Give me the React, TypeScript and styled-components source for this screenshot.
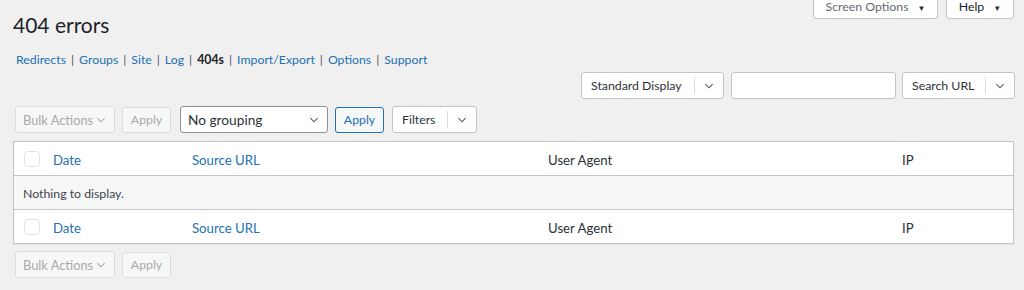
import React from 'react';
import styled, { createGlobalStyle, css } from 'styled-components';

const GlobalStyle = createGlobalStyle`
  html, body {
    margin: 0;
    padding: 0;
    background: #f0f0f1;
  }
  body {
    font-family: Lato, "Noto Sans", sans-serif;
    font-size: 12.3px;
    color: #3c434a;
  }
`;

const Page = styled.div`
  padding: 0 10px 0 13px;
  width: 1024px;
  box-sizing: border-box;
  white-space: nowrap;
`;

const Header = styled.div`
  display: flex;
  justify-content: space-between;
  align-items: flex-start;
`;

const Title = styled.h1`
  margin: 10px 0 0 0;
  font-size: 21px;
  font-weight: 400;
  line-height: 30px;
  color: #1d2327;
`;

const MetaLinks = styled.div`
  display: flex;
  gap: 8px;
  margin-top: -1px;
`;

const MetaTab = styled.button<{ $width: number; $dark?: boolean }>`
  width: ${(p) => p.$width}px;
  height: 20px;
  background: #fff;
  border: 1px solid #c3c4c7;
  border-top: none;
  border-radius: 0 0 4px 4px;
  font-family: inherit;
  font-size: 12.3px;
  color: ${(p) => (p.$dark ? '#1d2327' : '#646970')};
  padding: 0 0 2px 0;
  display: flex;
  align-items: center;
  justify-content: center;
  gap: 9px;
  line-height: 1;
`;

const TabArrow = styled.span`
  font-size: 8px;
  color: #2c3338;
`;

const SubNav = styled.ul`
  list-style: none;
  display: flex;
  margin: 10px 0 0 3px;
  padding: 0;
  line-height: 20px;
  color: #646970;
`;

const NavItem = styled.li`
  &:not(:last-child)::after {
    content: '|';
    padding: 0 5px;
    color: #50575e;
  }
`;

const NavLink = styled.a<{ $current?: boolean }>`
  color: ${(p) => (p.$current ? '#1d2327' : '#2271b1')};
  font-weight: ${(p) => (p.$current ? 700 : 400)};
  text-decoration: none;
`;

const ToolRow = styled.div<{ $right?: boolean; $top: number }>`
  display: flex;
  align-items: center;
  justify-content: ${(p) => (p.$right ? 'flex-end' : 'flex-start')};
  margin-top: ${(p) => p.$top}px;
  padding-left: ${(p) => (p.$right ? 0 : 2)}px;
  margin-right: ${(p) => (p.$right ? -1 : 0)}px;
`;

const controlBase = css`
  box-sizing: border-box;
  height: 27px;
  border-radius: 3px;
  font-family: inherit;
  font-size: 12.3px;
  background: #fff;
  display: flex;
  align-items: center;
`;

const SelectBox = styled.div<{ $width: number; $disabled?: boolean; $gap?: number }>`
  ${controlBase};
  width: ${(p) => p.$width}px;
  margin-right: ${(p) => p.$gap ?? 0}px;
  border: 1px solid ${(p) => (p.$disabled ? '#dcdcde' : '#8c8f94')};
  background: ${(p) => (p.$disabled ? '#f6f7f7' : '#fff')};
  color: ${(p) => (p.$disabled ? '#a7aaad' : '#2c3338')};
  font-size: ${(p) => (p.$disabled ? 12.8 : 13.7)}px;
  padding: 0 7px 0 7px;
  justify-content: space-between;
`;

const SplitButton = styled.div<{ $width: number; $gap?: number }>`
  ${controlBase};
  width: ${(p) => p.$width}px;
  margin-right: ${(p) => p.$gap ?? 0}px;
  border: 1px solid #c3c4c7;
  color: #2c3338;
  padding-left: 9px;
`;

const SplitLabel = styled.span`
  flex: 1;
`;

const SplitToggle = styled.span`
  width: 28px;
  height: 17px;
  border-left: 1px solid #dcdcde;
  display: flex;
  align-items: center;
  justify-content: center;
`;

const TextInput = styled.input<{ $width: number; $gap?: number }>`
  ${controlBase};
  width: ${(p) => p.$width}px;
  margin-right: ${(p) => p.$gap ?? 0}px;
  border: 1px solid #c3c4c7;
`;

const Button = styled.button<{ $variant?: 'disabled' | 'secondary'; $gap?: number }>`
  ${controlBase};
  margin-right: ${(p) => p.$gap ?? 0}px;
  height: 26px;
  width: 49px;
  justify-content: center;
  padding: 0;
  ${(p) =>
    p.$variant === 'disabled'
      ? css`
          background: #f6f7f7;
          border: 1px solid #dcdcde;
          color: #a7aaad;
        `
      : css`
          background: #f6f7f7;
          border: 1px solid #2271b1;
          color: #2271b1;
        `}
`;

const Table = styled.div`
  margin-top: 8px;
  background: #fff;
  border: 1px solid #c3c4c7;
  box-shadow: 0 1px 1px rgba(0, 0, 0, 0.04);
  width: 1001px;
  box-sizing: border-box;
`;

const Row = styled.div<{ $alt?: boolean; $border?: 'top' | 'bottom' }>`
  display: grid;
  grid-template-columns: 31px 139px 356px 354px 1fr;
  height: 33px;
  align-items: center;
  background: ${(p) => (p.$alt ? '#f6f7f7' : '#fff')};
  ${(p) => p.$border === 'bottom' && 'border-bottom: 1px solid #c3c4c7;'}
  ${(p) => p.$border === 'top' && 'border-top: 1px solid #c3c4c7;'}
`;

const CheckCell = styled.div`
  display: flex;
  padding-left: 10px;
`;

const Check = styled.span`
  width: 16px;
  height: 16px;
  box-sizing: border-box;
  border: 1px solid #e2e3e5;
  border-radius: 4px;
  background: #fff;
`;

const HeadCell = styled.div`
  padding: 2px 0 0 8px;
  font-size: 13.2px;
  color: #2c3338;
`;

const SortLink = styled.a`
  color: #2271b1;
  text-decoration: none;
`;

const EmptyCell = styled.div`
  grid-column: 1 / -1;
  padding: 1px 0 0 9px;
  color: #3c434a;
`;

const Chevron = ({ muted }: { muted?: boolean }) => (
  <svg width="12" height="12" viewBox="0 0 20 20" aria-hidden="true">
    <polyline
      points="4,7 10,13 16,7"
      fill="none"
      stroke={muted ? '#a7aaad' : '#50575e'}
      strokeWidth="1.8"
    />
  </svg>
);

const navItems = ['Redirects', 'Groups', 'Site', 'Log', '404s', 'Import/Export', 'Options', 'Support'];

function TableHeadRow({ border }: { border: 'top' | 'bottom' }): JSX.Element {
  return (
    <Row $border={border}>
      <CheckCell>
        <Check />
      </CheckCell>
      <HeadCell>
        <SortLink href="#">Date</SortLink>
      </HeadCell>
      <HeadCell>
        <SortLink href="#">Source URL</SortLink>
      </HeadCell>
      <HeadCell>User Agent</HeadCell>
      <HeadCell>IP</HeadCell>
    </Row>
  );
}

function BulkActions({ gap }: { gap: number }): JSX.Element {
  return (
    <>
      <SelectBox $width={100} $disabled $gap={7}>
        Bulk Actions
        <Chevron muted />
      </SelectBox>
      <Button $variant="disabled" $gap={gap}>
        Apply
      </Button>
    </>
  );
}

function App(): JSX.Element {
  return (
    <Page>
      <GlobalStyle />
      <Header>
        <Title>404 errors</Title>
        <MetaLinks>
          <MetaTab $width={125}>
            Screen Options <TabArrow>▼</TabArrow>
          </MetaTab>
          <MetaTab $width={68} $dark>
            Help <TabArrow>▼</TabArrow>
          </MetaTab>
        </MetaLinks>
      </Header>

      <SubNav>
        {navItems.map((item) => (
          <NavItem key={item}>
            <NavLink href="#" $current={item === '404s'}>
              {item}
            </NavLink>
          </NavItem>
        ))}
      </SubNav>

      <ToolRow $right $top={2}>
        <SplitButton $width={143} $gap={7}>
          <SplitLabel>Standard Display</SplitLabel>
          <SplitToggle>
            <Chevron />
          </SplitToggle>
        </SplitButton>
        <TextInput $width={165} $gap={6} />
        <SplitButton $width={113}>
          <SplitLabel>Search URL</SplitLabel>
          <SplitToggle>
            <Chevron />
          </SplitToggle>
        </SplitButton>
      </ToolRow>

      <ToolRow $top={7}>
        <BulkActions gap={9} />
        <SelectBox $width={148} $gap={7}>
          No grouping
          <Chevron />
        </SelectBox>
        <Button $variant="secondary" $gap={8}>
          Apply
        </Button>
        <SplitButton $width={85}>
          <SplitLabel>Filters</SplitLabel>
          <SplitToggle>
            <Chevron />
          </SplitToggle>
        </SplitButton>
      </ToolRow>

      <Table>
        <TableHeadRow border="bottom" />
        <Row $alt>
          <EmptyCell>Nothing to display.</EmptyCell>
        </Row>
        <TableHeadRow border="top" />
      </Table>

      <ToolRow $top={7}>
        <BulkActions gap={0} />
      </ToolRow>
    </Page>
  );
}

export default App;
